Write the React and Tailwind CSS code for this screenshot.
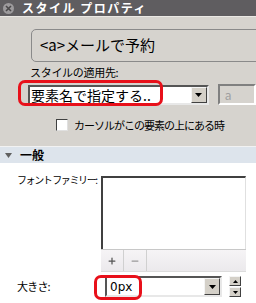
import { Plus, Minus } from "lucide-react";

const jp = { fontFamily: '"Noto Sans CJK JP", "Noto Sans", sans-serif' };

function DropButton({ className = "" }) {
  return (
    <div
      className={
        "flex items-center justify-center bg-[#d4d0c8] border border-t-[#f4f4f4] border-l-[#f4f4f4] border-b-[#404040] border-r-[#404040] " +
        className
      }
    >
      <svg width="7" height="4" viewBox="0 0 7 4">
        <path d="M0 0h7L3.5 4z" fill="#000" />
      </svg>
    </div>
  );
}

export default function App() {
  return (
    <div
      className="w-[256px] h-[303px] overflow-hidden bg-[#d6d3ce] flex flex-col text-black"
      style={jp}
    >
      {/* title bar */}
      <div className="h-[17px] bg-[#5f5d60] flex items-center pl-[3px] gap-[8px] border-b border-[#eae8e4] shrink-0">
        <div className="w-[11px] h-[11px] rounded-full bg-[#9c9a9c] flex items-center justify-center">
          <svg width="7" height="7" viewBox="0 0 7 7">
            <path d="M1 1l5 5M6 1L1 6" stroke="#4a484a" strokeWidth="1.6" />
          </svg>
        </div>
        <span className="text-white text-[12px] font-bold leading-none tracking-[1.5px] whitespace-nowrap">
          スタイル プロパティ
        </span>
      </div>

      {/* top section */}
      <div className="h-[130px] shrink-0 flex flex-col relative border-b border-[#f2f2f2]">
        <div className="mt-[12px] ml-[31px] w-[240px] h-[33px] rounded-[5px] border border-[#8a8a8a] flex items-center pl-[8px] text-[15px] whitespace-nowrap">
          &lt;a&gt;メールで予約
        </div>
        <div className="ml-[30px] mt-[3px] text-[11px] leading-[14px] tracking-[-0.3px] whitespace-nowrap">
          スタイルの適用先:
        </div>
        <div className="mt-[5px] flex items-center">
          <div className="ml-[28px] w-[191px] h-[20px] bg-white border-2 border-t-[#555] border-l-[#555] border-b-[#e8e8e8] border-r-[#e8e8e8] flex items-center justify-between">
            <span className="text-[14px] leading-none pl-[1px] whitespace-nowrap">要素名で指定する..</span>
            <DropButton className="w-[16px] h-[16px]" />
          </div>
          <div className="ml-[9px] w-[40px] h-[21px] border-2 border-t-[#808080] border-l-[#808080] border-b-[#ffffff] border-r-[#ffffff] flex items-center pl-[5px] text-[12px] text-[#a0a0a0] leading-none">
            a
          </div>
        </div>
        <div className="mt-[14px] ml-[56px] flex items-center gap-[6px]">
          <div className="w-[12px] h-[12px] bg-white border border-t-[#404040] border-l-[#404040] border-b-[#e0e0e0] border-r-[#e0e0e0]" />
          <span className="text-[11px] leading-none tracking-[-1px] whitespace-nowrap">カーソルがこの要素の上にある時</span>
        </div>
        <div className="absolute left-[18px] top-[63px] w-[145px] h-[26px] rounded-[7px] border-[3px] border-[#e8101a]" />
      </div>

      {/* section header */}
      <div className="h-[16px] shrink-0 bg-[#dde4ec] flex items-center pl-[5px] gap-[8px]">
        <svg width="7" height="5" viewBox="0 0 7 5">
          <path d="M0 0h7L3.5 5z" fill="#606060" />
        </svg>
        <span className="text-[12px] font-bold leading-none">一般</span>
      </div>

      {/* body */}
      <div className="flex-1 bg-white flex flex-col relative">
        <div className="mt-[13px] flex items-start">
          <div className="ml-[17px] w-[84px] shrink-0">
            <span className="block text-[10px] leading-none mt-[-1px] tracking-[-1.4px] whitespace-nowrap">
              フォント ファミリー:
            </span>
          </div>
          <div className="flex flex-col w-[145px]">
            <div className="h-[73px] border-t-2 border-l-2 border-[#404040] border-r border-r-[#e0e0e0] bg-white" />
            <div className="h-[23px] flex bg-gradient-to-b from-[#f6f4f6] to-[#ebe9ec] border-t border-[#c8c8c8] border-b border-b-[#dcdcdc]">
              <div className="w-[23px] flex items-center justify-center border-r border-[#d0d0d0]">
                <Plus size={10} strokeWidth={3} color="#555" />
              </div>
              <div className="w-[23px] flex items-center justify-center border-r border-[#d0d0d0]">
                <Minus size={10} strokeWidth={3} color="#999" />
              </div>
            </div>
          </div>
        </div>
        <div className="mt-[4px] flex items-center">
          <span className="ml-[17px] w-[88px] text-[11px] leading-none tracking-[-0.8px]">大きさ:</span>
          <div className="w-[117px] h-[21px] border-2 border-t-[#555] border-l-[#555] border-b-[#e8e8e8] border-r-[#e8e8e8] flex items-center justify-between">
            <span className="text-[12px] leading-none pl-[3px]" style={{ fontFamily: '"DejaVu Sans", sans-serif' }}>0px</span>
            <DropButton className="w-[16px] h-[17px]" />
          </div>
          <div className="ml-[7px] flex flex-col gap-[1px]">
            <div className="w-[12px] h-[10px] bg-[#d4d0c8] border border-t-[#f4f4f4] border-l-[#f4f4f4] border-b-[#404040] border-r-[#404040] flex items-center justify-center">
              <svg width="5" height="3" viewBox="0 0 5 3"><path d="M2.5 0L5 3H0z" fill="#000" /></svg>
            </div>
            <div className="w-[12px] h-[10px] bg-[#d4d0c8] border border-t-[#f4f4f4] border-l-[#f4f4f4] border-b-[#404040] border-r-[#404040] flex items-center justify-center">
              <svg width="5" height="3" viewBox="0 0 5 3"><path d="M0 0h5L2.5 3z" fill="#000" /></svg>
            </div>
          </div>
        </div>
        <div className="absolute left-[94px] top-[112px] w-[48px] h-[25px] rounded-[7px] border-[3px] border-[#e8101a]" />
      </div>
    </div>
  );
}
